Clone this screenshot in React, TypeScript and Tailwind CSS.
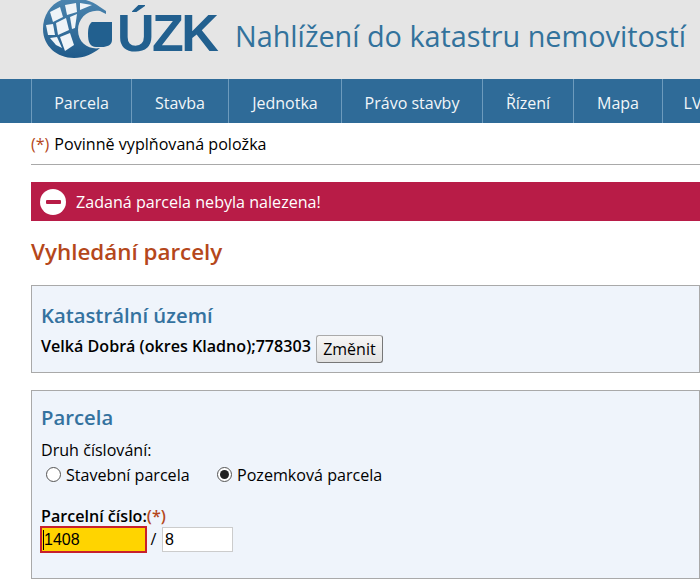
import React from "react";

const font = { fontFamily: '"Open Sans", "Noto Sans", sans-serif' };
const arial = { fontFamily: '"Liberation Sans", sans-serif' };

function Globe() {
  return (
    <svg width="76" height="60" viewBox="42 0 76 60" className="shrink-0">
      <defs>
        <linearGradient id="lg" x1="0" y1="0" x2="0" y2="1">
          <stop offset="0" stopColor="#4d86b0" />
          <stop offset="1" stopColor="#1f5a8a" />
        </linearGradient>
      </defs>
      <path d="M100 7 C92 1 82 -2 72 -2 C55 -2 43 12 43 29 C43 46 57 58 74 58 C84 58 93 54 100 48 C90 50 78 44 78 30 C78 18 88 9 100 11 L106 14 L106 11 Z" fill="url(#lg)" />
      <g fill="#eff4f8">
        <path d="M50 12 L60 7 L63 17 L53 22 Z" />
        <path d="M65 5 L76 3 L77 12 L67 15 Z" />
        <path d="M46 25 L53 24 L55 35 L48 35 Z" />
        <path d="M56 23 L66 18 L69 30 L58 35 Z" />
        <path d="M70 17 L77 14 L75 28 L72 29 Z" />
        <path d="M50 38 L57 37 L62 48 L56 45 Z" />
        <path d="M60 37 L70 33 L74 45 L65 51 Z" />
        <path d="M80 3 L92 5 L80 10 Z" />
      </g>
      <path d="M92 22 L112 22 L112 40 C112 45 107 47 102 47 L96 47 C90 47 88 42 88 34 C88 28 89 24 92 22 Z" fill="#22608f" />
    </svg>
  );
}

const navItems: [string, string][] = [
  ["Parcela", "w-[100px]"],
  ["Stavba", "w-[97px]"],
  ["Jednotka", "w-[113px]"],
  ["Právo stavby", "w-[141px]"],
  ["Řízení", "w-[91px]"],
  ["Mapa", "w-[89px]"],
  ["LV", "w-[60px]"],
];

function Radio({ checked }: { checked?: boolean }) {
  return (
    <span className="w-[15px] h-[15px] rounded-full border border-[#555] bg-white flex items-center justify-center shrink-0">
      {checked && <span className="w-[9px] h-[9px] rounded-full bg-[#222]" />}
    </span>
  );
}

export default function App() {
  return (
    <div className="w-[700px] h-[586px] overflow-hidden bg-white text-black text-[16.1px]" style={font}>
      <header className="h-[79px] bg-[#e5e5e5] flex items-start pl-[42px]">
        <div className="flex items-start h-[60px]">
          <Globe />
          <span className="-ml-[1px] mt-[7px] text-[52px] leading-[52px] font-bold text-[#22608f] tracking-[-2.5px] w-[103px]" style={arial}>ÚZK</span>
        </div>
        <h1 className="ml-[15px] mt-[17px] text-[28.8px] leading-[38px] text-[#32729c] whitespace-nowrap">Nahlížení do katastru nemovitostí</h1>
      </header>

      <nav className="h-[44px] bg-[#2f6b98] flex pl-[31px]">
        {navItems.map(([label, w]) => (
          <div key={label} className={`${w} shrink-0 border-l border-[#6d9bbd] flex items-center justify-center pt-[3px] text-[#f2f6f9] text-[16px] whitespace-nowrap`}>
            {label}
          </div>
        ))}
      </nav>

      <main className="pl-[31px]">
        <p className="h-[42px] pt-[2px] flex items-center border-b border-[#a9a9a9] whitespace-nowrap">
          <span className="text-[#b5471b] mr-[5px]">(*)</span>Povinně vyplňovaná položka
        </p>

        <div className="mt-[17px] h-[39px] bg-[#b81c47] flex items-center pl-[9px] text-white">
          <span className="w-[26px] h-[26px] rounded-full bg-white flex items-center justify-center">
            <span className="w-[15px] h-[4px] rounded-[1px] bg-[#b81c47]" />
          </span>
          <span className="ml-[10px] pt-[2px]">Zadaná parcela nebyla nalezena!</span>
        </div>

        <h2 className="mt-[14px] text-[22.4px] leading-[34px] font-semibold text-[#b5471b]">Vyhledání parcely</h2>

        <section className="mt-[16px] h-[88px] bg-[#eff4fb] border border-[#a9a9a9] pl-[9px] pt-[14px]">
          <h3 className="text-[20.3px] leading-[30px] font-semibold text-[#34729f]">Katastrální území</h3>
          <div className="flex items-start font-semibold mt-[4px]">
            <span className="leading-[24px]">Velká Dobrá (okres Kladno);778303</span>
            <button className="ml-[5px] mt-[1px] w-[67px] h-[28px] rounded-[3px] border border-[#aaa] border-b-[#777] border-r-[#777] bg-gradient-to-b from-[#f7f7f7] to-[#e2e2e2] font-normal text-center text-[16px]">Změnit</button>
          </div>
        </section>

        <section className="mt-[17px] h-[189px] bg-[#eff4fb] border border-[#a9a9a9] pl-[9px] pt-[11px]">
          <h3 className="text-[20.3px] leading-[30px] font-semibold text-[#34729f]">Parcela</h3>
          <div className="mt-[7px] leading-[22px]">Druh číslování:</div>
          <div className="flex items-center h-[28px] ml-[5px]">
            <label className="flex items-center w-[171px]"><Radio /><span className="ml-[5px]">Stavební parcela</span></label>
            <label className="flex items-center"><Radio checked /><span className="ml-[5px]">Pozemková parcela</span></label>
          </div>
          <div className="mt-[17px] leading-[20px] font-semibold whitespace-nowrap">Parcelní číslo:<span className="text-[#b5471b]">(*)</span></div>
          <div className="flex items-center -ml-[1px]">
            <div className="w-[107px] h-[27px] border-2 border-[#c8202c] bg-[#ffd400] pl-[1px] flex items-center text-[16px]" style={arial}>
              <span className="border-l border-black leading-[20px]">1408</span>
            </div>
            <span className="ml-[1px] w-[11px] text-center">/</span>
            <div className="ml-[3px] w-[71px] h-[25px] border border-[#ccc] bg-white pl-[2px] flex items-center text-[16px]" style={arial}>8</div>
          </div>
        </section>
      </main>
    </div>
  );
}
